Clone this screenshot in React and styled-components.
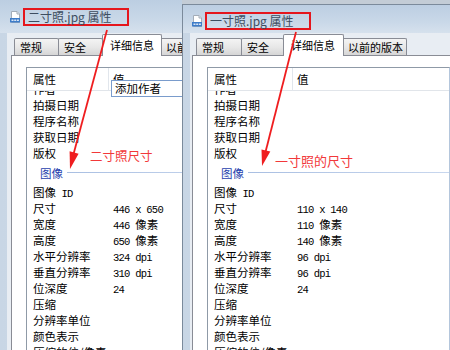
import React from "react";
import styled, { createGlobalStyle } from "styled-components";

const GlobalStyle = createGlobalStyle`
  html, body {
    margin: 0;
    padding: 0;
    width: 450px;
    height: 350px;
    overflow: hidden;
  }
  body {
    font-family: "Noto Sans CJK SC", "Liberation Sans", sans-serif;
    color: #000;
  }
`;

const Stage = styled.div`
  position: relative;
  display: flex;
  width: 450px;
  height: 350px;
  overflow: hidden;
  background: #c3ccd6;
`;

const Window = styled.div`
  flex: none;
  box-sizing: border-box;
  width: ${({ $width }) => $width}px;
  margin: ${({ $top }) => $top}px 0 0 ${({ $shift }) => $shift}px;
  display: flex;
  flex-direction: column;
  overflow: hidden;
  border-left: 1px solid #7b8a9b;
  border-top: ${({ $top }) => ($top ? "1px solid #7b8a9b" : "none")};
  background: linear-gradient(90deg, #c8d6e5, #d3deea);
`;

const TitleBar = styled.div`
  flex: none;
  box-sizing: border-box;
  height: ${({ $h }) => $h}px;
  padding: ${({ $padTop }) => $padTop}px 0 0 ${({ $padLeft }) => $padLeft}px;
  display: flex;
  align-items: flex-start;
  background: linear-gradient(180deg, #bccee2 0%, #c9d8e8 60%, #d6e1ed 100%);
`;

const Caption = styled.div`
  display: flex;
  align-items: center;
  gap: 2px;
`;

const Title = styled.div`
  box-sizing: border-box;
  width: 106px;
  height: 18px;
  border: 2px solid #e5161d;
  padding-left: 3px;
  font-size: 12px;
  line-height: 14px;
  color: #3d4d60;
  white-space: nowrap;
`;

const Client = styled.div`
  flex: 1;
  min-height: 0;
  margin-left: 7px;
  padding-left: ${({ $inset }) => $inset}px;
  display: flex;
  flex-direction: column;
  background: #e8edf3;
`;

const TabStrip = styled.div`
  position: relative;
  z-index: 1;
  flex: none;
  height: 22px;
  padding-left: ${({ $pad }) => $pad}px;
  display: flex;
  align-items: flex-end;
`;

const Tab = styled.div`
  box-sizing: border-box;
  flex: none;
  position: relative;
  z-index: ${({ $active }) => ($active ? 2 : 1)};
  width: ${({ $w }) => $w}px;
  height: ${({ $active }) => ($active ? 22 : 17)}px;
  margin: 0 ${({ $active }) => ($active ? -2 : -1)}px ${({ $active }) => ($active ? -1 : 0)}px 0;
  padding: ${({ $active }) => ($active ? "2px 0 0 7px" : "0 0 0 5px")};
  border: 1px solid #898c95;
  border-bottom: none;
  border-radius: 2px 2px 0 0;
  background: ${({ $active }) =>
    $active ? "#fff" : "linear-gradient(180deg, #f4f4f4 0%, #e8e8e8 50%, #d6d6d6 100%)"};
  font-size: 11px;
  line-height: 16px;
  white-space: nowrap;
  overflow: hidden;
`;

const Panel = styled.div`
  flex: 1;
  min-height: 0;
  padding: 11px 0 0 14px;
  display: flex;
  flex-direction: column;
  border-top: 1px solid #898c95;
  border-left: 1px solid #898c95;
  background: #fff;
`;

const ListBox = styled.div`
  position: relative;
  flex: 1;
  min-height: 0;
  box-sizing: border-box;
  width: ${({ $w }) => $w}px;
  display: flex;
  flex-direction: column;
  border: 1px solid #8f9aa7;
  border-right-color: ${({ $edge }) => $edge || "#8f9aa7"};
  border-bottom: none;
`;

const Header = styled.div`
  flex: none;
  display: grid;
  grid-template-columns: ${({ $col }) => $col}px 1fr;
  height: 22px;
  border-bottom: 1px solid #e1e5ea;
  font-size: 11.5px;
  line-height: 23px;
`;

const HeadCell = styled.div`
  padding-left: ${({ $first }) => ($first ? 6 : 4)}px;
  border-right: ${({ $first }) => ($first ? "1px solid #e1e6ec" : "none")};
`;

const Body = styled.div`
  flex: 1;
  min-height: 0;
  overflow: hidden;
`;

const Rows = styled.div`
  margin-top: -10px;
`;

const Row = styled.div`
  display: grid;
  grid-template-columns: ${({ $col }) => $col}px 1fr;
  height: 16px;
  font-size: 11.5px;
  line-height: 16px;
  white-space: nowrap;
`;

const Label = styled.div`
  padding-left: 6px;
  overflow: hidden;
`;

const Value = styled.div`
  padding-left: 4px;
`;

const Mono = styled.span`
  font-family: "Liberation Mono", "DejaVu Sans Mono", monospace;
  font-size: 10.5px;
  letter-spacing: -0.75px;
`;

const GroupRow = styled.div`
  display: flex;
  align-items: center;
  height: 23px;
  padding-left: 13px;
  font-size: 11.5px;
  color: #1f3fae;

  &::after {
    content: "";
    flex: 1;
    height: 1px;
    margin-left: 4px;
    background: linear-gradient(90deg, #a9bfe2, #c8d7ee);
  }
`;

const EditBox = styled.div`
  position: absolute;
  left: 84px;
  top: 12px;
  z-index: 1;
  box-sizing: border-box;
  width: 120px;
  height: 17px;
  padding-left: 3px;
  border: 1px solid #7a9ccc;
  background: #fff;
  font-size: 11.5px;
  line-height: 15px;
  white-space: nowrap;
`;

const Overlay = styled.svg`
  position: absolute;
  left: 0;
  top: 0;
  z-index: 5;
  pointer-events: none;
`;

const Note = styled.div`
  position: absolute;
  left: ${({ $x }) => $x}px;
  top: ${({ $y }) => $y}px;
  z-index: 5;
  color: #f2383a;
  font-size: ${({ $size }) => $size}px;
  line-height: 1;
  white-space: nowrap;
`;

const FileIcon = () => (
  <svg width="11" height="12" viewBox="0 0 11 12">
    <path d="M1.5 0.5h5.5l2.5 2.5v8.5h-8z" fill="#fff" stroke="#a3adb9" />
    <path d="M7 0.5v2.5h2.5" fill="#e6eaef" stroke="#a3adb9" />
    <rect x="0" y="7" width="10" height="4.5" fill="#3d7cc9" />
    <rect x="1.5" y="8.6" width="2" height="1.2" fill="#fff" />
    <rect x="4.2" y="8.6" width="2" height="1.2" fill="#fff" />
    <rect x="6.9" y="8.6" width="2" height="1.2" fill="#fff" />
  </svg>
);

const topRows = ["作者", "拍摄日期", "程序名称", "获取日期", "版权"];

const imageRows = (d) => [
  { label: <>图像<Mono> ID</Mono></> },
  { label: "尺寸", num: `${d.w} x ${d.h}` },
  { label: "宽度", num: `${d.w} `, unit: "像素" },
  { label: "高度", num: `${d.h} `, unit: "像素" },
  { label: "水平分辨率", num: `${d.dx} dpi` },
  { label: "垂直分辨率", num: `${d.dy} dpi` },
  { label: "位深度", num: "24" },
  { label: "压缩" },
  { label: "分辨率单位" },
  { label: "颜色表示" },
  { label: "压缩的位/像素" },
];

const PropsWindow = ({ cfg }) => (
  <Window $width={cfg.width} $top={cfg.top} $shift={cfg.shift}>
    <TitleBar $h={cfg.titleH} $padTop={cfg.titlePad} $padLeft={cfg.iconLeft}>
      <Caption>
        <FileIcon />
        <Title>{cfg.name}.jpg 属性</Title>
      </Caption>
    </TitleBar>
    <Client $inset={cfg.inset}>
      <TabStrip $pad={cfg.tabPad}>
        {cfg.tabs.map((t) => (
          <Tab key={t.text} $w={t.w} $active={t.active}>
            {t.text}
          </Tab>
        ))}
      </TabStrip>
      <Panel>
        <ListBox $w={cfg.listW} $edge={cfg.edge}>
          <Header $col={cfg.col}>
            <HeadCell $first>属性</HeadCell>
            <HeadCell>值</HeadCell>
          </Header>
          {cfg.edit && <EditBox>添加作者</EditBox>}
          <Body>
            <Rows>
              {topRows.map((r) => (
                <Row key={r} $col={cfg.col}>
                  <Label>{r}</Label>
                  <Value />
                </Row>
              ))}
              <GroupRow>图像</GroupRow>
              {imageRows(cfg.data).map((r, i) => (
                <Row key={i} $col={cfg.col}>
                  <Label>{r.label}</Label>
                  <Value>
                    {r.num && <Mono>{r.num}</Mono>}
                    {r.unit}
                  </Value>
                </Row>
              ))}
            </Rows>
          </Body>
        </ListBox>
      </Panel>
    </Client>
  </Window>
);

const leftWin = {
  name: "二寸照",
  width: 183,
  top: 0,
  shift: -1,
  titleH: 33,
  titlePad: 8,
  iconLeft: 10,
  inset: 4,
  tabPad: 3,
  tabs: [
    { text: "常规", w: 45 },
    { text: "安全", w: 45 },
    { text: "详细信息", w: 60, active: true },
    { text: "以前的版本", w: 62 },
  ],
  listW: 220,
  col: 82,
  edit: true,
  data: { w: 446, h: 650, dx: 324, dy: 310 },
};

const rightWin = {
  name: "一寸照",
  width: 280,
  top: 4,
  shift: 0,
  titleH: 28,
  titlePad: 7,
  iconLeft: 9,
  inset: 2,
  tabPad: 4,
  tabs: [
    { text: "常规", w: 46 },
    { text: "安全", w: 43 },
    { text: "详细信息", w: 61, active: true },
    { text: "以前的版本", w: 65 },
  ],
  listW: 243,
  edge: "#b4c6dc",
  col: 85,
  edit: false,
  data: { w: 110, h: 140, dx: 96, dy: 96 },
};

const Annotations = () => (
  <>
    <Overlay width="450" height="350" viewBox="0 0 450 350">
      <g fill="#ef1d1f" stroke="#ef1d1f">
        <line x1="107" y1="30" x2="73" y2="156" strokeWidth="1.8" />
        <polygon points="70,169 78.6,153.7 69.6,151.3" stroke="none" />
        <line x1="296" y1="32" x2="265" y2="154" strokeWidth="1.8" />
        <polygon points="262,166 270.3,151.6 261.5,149.4" stroke="none" />
      </g>
    </Overlay>
    <Note $x={90} $y={150} $size={12.5}>二寸照尺寸</Note>
    <Note $x={275} $y={154} $size={13}>一寸照的尺寸</Note>
  </>
);

export default function App() {
  return (
    <>
      <GlobalStyle />
      <Stage>
        <PropsWindow cfg={leftWin} />
        <PropsWindow cfg={rightWin} />
        <Annotations />
      </Stage>
    </>
  );
}
